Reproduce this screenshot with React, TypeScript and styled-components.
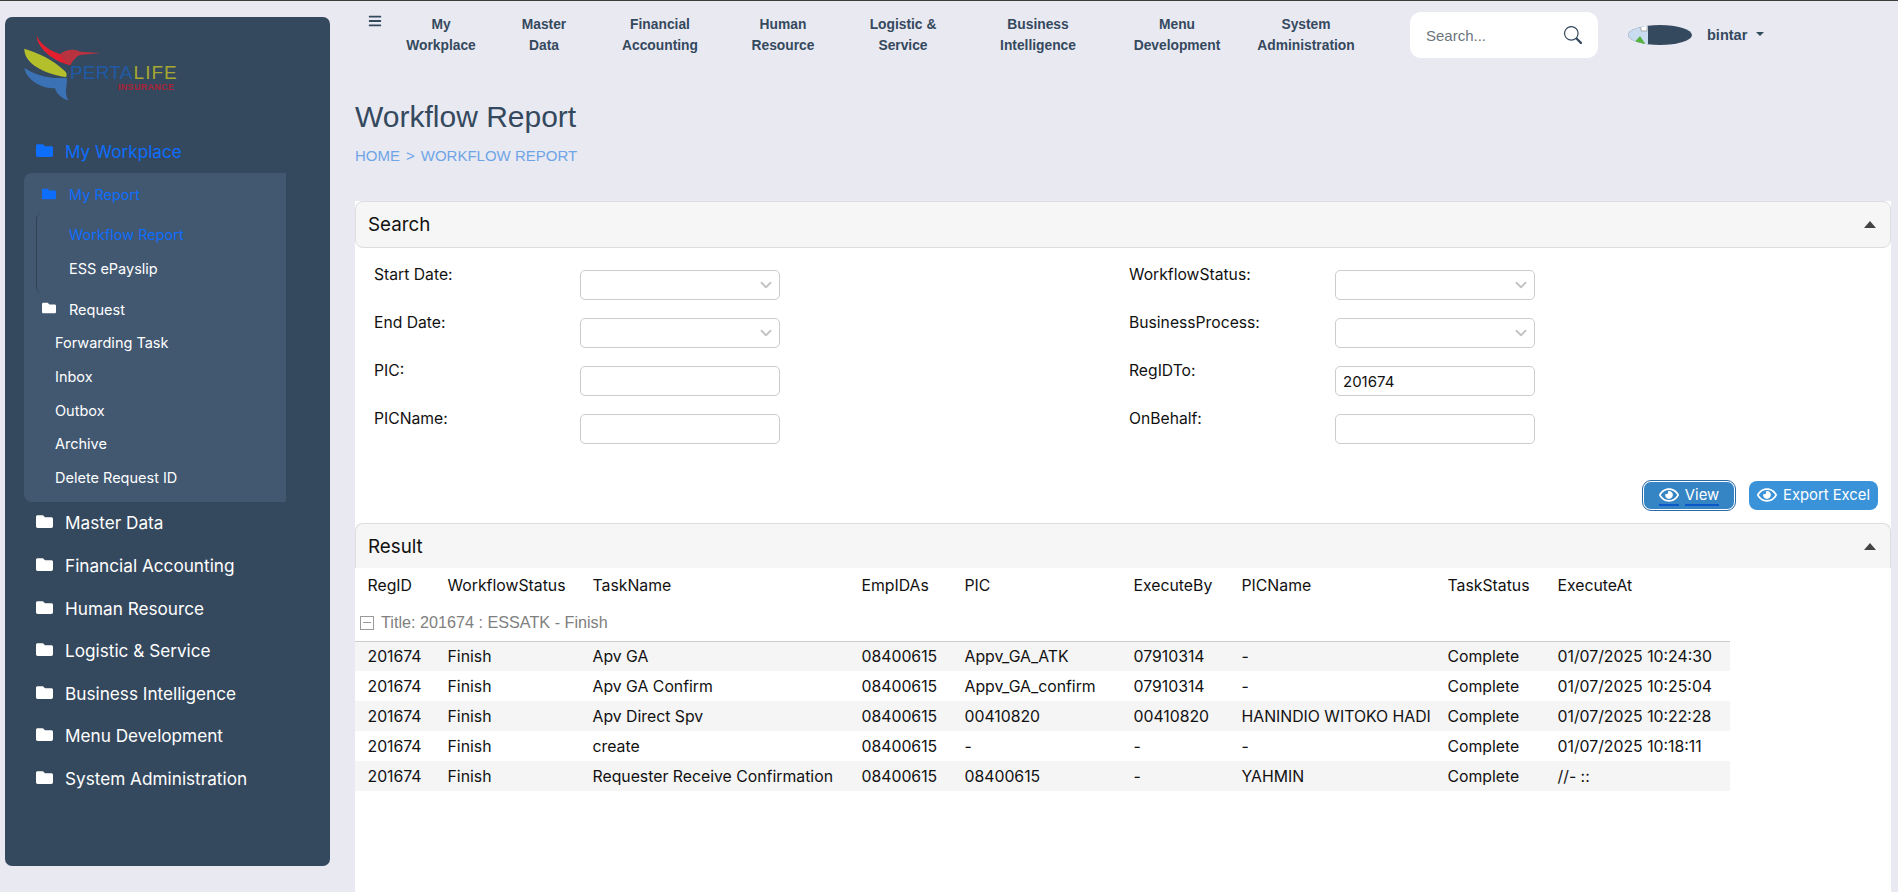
import { FC } from 'react';
import styled, { createGlobalStyle } from 'styled-components';
import { FaFolder, FaBars, FaRegEye } from 'react-icons/fa';
import { BsSearch } from 'react-icons/bs';
import { ChevronDown } from 'lucide-react';

const UI_FONT = `Inter, "Noto Sans", sans-serif`;
const ARIAL = `"Liberation Sans", Arial, sans-serif`;

const NAV_ITEMS = [
	['My', 'Workplace'],
	['Master', 'Data'],
	['Financial', 'Accounting'],
	['Human', 'Resource'],
	['Logistic &', 'Service'],
	['Business', 'Intelligence'],
	['Menu', 'Development'],
	['System', 'Administration'],
];

const SIDE_ITEMS = [
	'Master Data',
	'Financial Accounting',
	'Human Resource',
	'Logistic & Service',
	'Business Intelligence',
	'Menu Development',
	'System Administration',
];

const REQUEST_ITEMS = ['Forwarding Task', 'Inbox', 'Outbox', 'Archive', 'Delete Request ID'];

const COLUMNS = [
	'RegID',
	'WorkflowStatus',
	'TaskName',
	'EmpIDAs',
	'PIC',
	'ExecuteBy',
	'PICName',
	'TaskStatus',
	'ExecuteAt',
];

const COLUMN_WIDTHS = [80, 145, 269, 103, 169, 108, 206, 110, 185];

const ROWS = [
	['201674', 'Finish', 'Apv GA', '08400615', 'Appv_GA_ATK', '07910314', '-', 'Complete', '01/07/2025 10:24:30'],
	['201674', 'Finish', 'Apv GA Confirm', '08400615', 'Appv_GA_confirm', '07910314', '-', 'Complete', '01/07/2025 10:25:04'],
	['201674', 'Finish', 'Apv Direct Spv', '08400615', '00410820', '00410820', 'HANINDIO WITOKO HADI', 'Complete', '01/07/2025 10:22:28'],
	['201674', 'Finish', 'create', '08400615', '-', '-', '-', 'Complete', '01/07/2025 10:18:11'],
	['201674', 'Finish', 'Requester Receive Confirmation', '08400615', '08400615', '-', 'YAHMIN', 'Complete', '//- ::'],
];

const Logo: FC = () => (
	<LogoWrap>
		<svg width="84" height="70" viewBox="60 100 252 210">
			<path d="M110 108C112 150 170 190 212 196L222 170C180 168 130 150 110 108Z" fill="#e3202f" />
			<path d="M178 165C195 150 220 145 240 156L302 160L240 166C225 172 218 190 205 195C195 185 185 175 178 165Z" fill="#b8323f" />
			<path d="M73 147C72 190 130 222 198 232C202 226 200 220 195 215C160 180 115 160 73 147Z" fill="#b3c02c" />
			<path d="M73 205C80 245 135 270 165 265C168 282 188 298 205 302C190 275 204 255 200 234C150 240 105 225 73 205Z" fill="#3b71b5" />
		</svg>
		<LogoName>
			PERTA<LogoLife>LIFE</LogoLife>
		</LogoName>
		<LogoTag>INSURANCE</LogoTag>
	</LogoWrap>
);

const SelectField: FC = () => (
	<SelectWrap>
		<FieldBox as="select" />
		<SelectArrow>
			<ChevronDown size={18} strokeWidth={2.4} />
		</SelectArrow>
	</SelectWrap>
);

const PanelHeader: FC<{ title: string; $open?: boolean }> = ({ title, $open }) => (
	<PanelHead $open={$open}>
		<span>{title}</span>
		<CollapseCaret />
	</PanelHead>
);

const App: FC = () => (
	<>
		<GlobalStyle />
		<Page>
			<Sidebar>
				<Logo />
				<SideNav>
					<TopItem $active>
						<FaFolder size={17} />
						<span>My Workplace</span>
					</TopItem>
					<SubMenu>
						<SubHead $active $first>
							<FaFolder size={14} />
							<span>My Report</span>
						</SubHead>
						<DottedGroup>
							<DottedLink $active>Workflow Report</DottedLink>
							<DottedLink>ESS ePayslip</DottedLink>
						</DottedGroup>
						<SubHead>
							<FaFolder size={14} />
							<span>Request</span>
						</SubHead>
						{REQUEST_ITEMS.map((item) => (
							<SubLink key={item}>{item}</SubLink>
						))}
					</SubMenu>
					{SIDE_ITEMS.map((item) => (
						<TopItem key={item}>
							<FaFolder size={17} />
							<span>{item}</span>
						</TopItem>
					))}
				</SideNav>
			</Sidebar>

			<Main>
				<Topbar>
					<MenuButton>
						<FaBars size={14} />
					</MenuButton>
					<TopNav>
						{NAV_ITEMS.map(([first, second]) => (
							<TopNavItem key={first}>
								{first}
								<br />
								{second}
							</TopNavItem>
						))}
					</TopNav>
					<SearchBox>
						<SearchInput placeholder="Search..." />
						<BsSearch size={18} color="#35495e" />
					</SearchBox>
					<Avatar>
						<svg width="20" height="20" viewBox="0 0 20 20">
							<rect x="0" y="0" width="20" height="20" fill="#c9dcf0" />
							<path d="M4 20L12 11L18 20Z" fill="#56b33e" />
							<path d="M13 0H19V6H13Z" fill="#ffffff" stroke="#999999" strokeWidth="0.8" />
						</svg>
					</Avatar>
					<UserName>bintar</UserName>
					<UserCaret />
				</Topbar>

				<PageTitle>Workflow Report</PageTitle>
				<Breadcrumb>
					HOME<CrumbSep>&gt;</CrumbSep>WORKFLOW REPORT
				</Breadcrumb>

				<Panel>
					<PanelHeader title="Search" />
					<FormGrid>
						<FieldRow>
							<FieldLabel>Start Date:</FieldLabel>
							<SelectField />
						</FieldRow>
						<FieldRow>
							<FieldLabel>WorkflowStatus:</FieldLabel>
							<SelectField />
						</FieldRow>
						<FieldRow>
							<FieldLabel>End Date:</FieldLabel>
							<SelectField />
						</FieldRow>
						<FieldRow>
							<FieldLabel>BusinessProcess:</FieldLabel>
							<SelectField />
						</FieldRow>
						<FieldRow>
							<FieldLabel>PIC:</FieldLabel>
							<FieldBox />
						</FieldRow>
						<FieldRow>
							<FieldLabel>RegIDTo:</FieldLabel>
							<FieldBox defaultValue="201674" />
						</FieldRow>
						<FieldRow>
							<FieldLabel>PICName:</FieldLabel>
							<FieldBox />
						</FieldRow>
						<FieldRow>
							<FieldLabel>OnBehalf:</FieldLabel>
							<FieldBox />
						</FieldRow>
					</FormGrid>
					<ButtonRow>
						<ActionButton $focused $width={92}>
							<ButtonPart>
								<FaRegEye size={20} />
							</ButtonPart>
							<ButtonPart>View</ButtonPart>
						</ActionButton>
						<ActionButton $width={129}>
							<ButtonPart>
								<FaRegEye size={20} />
							</ButtonPart>
							<ButtonPart>Export Excel</ButtonPart>
						</ActionButton>
					</ButtonRow>
					<PanelHeader title="Result" $open />
					<ResultTable>
						<colgroup>
							{COLUMN_WIDTHS.map((width, i) => (
								<col key={i} style={{ width }} />
							))}
						</colgroup>
						<thead>
							<tr>
								{COLUMNS.map((col) => (
									<HeadCell key={col}>{col}</HeadCell>
								))}
							</tr>
						</thead>
						<tbody>
							<tr>
								<GroupCell colSpan={COLUMNS.length}>
									<GroupToggle />
									Title: 201674 : ESSATK - Finish
								</GroupCell>
							</tr>
							{ROWS.map((row, i) => (
								<DataRow key={row[2]} $striped={i % 2 === 0}>
									{row.map((cell, j) => (
										<DataCell key={j}>{cell}</DataCell>
									))}
								</DataRow>
							))}
						</tbody>
					</ResultTable>
				</Panel>
			</Main>
		</Page>
	</>
);

const GlobalStyle = createGlobalStyle`
	html, body {
		margin: 0;
		padding: 0;
		height: 100%;
		overflow: hidden;
		background: #e9e9f2;
		font-family: ${UI_FONT};
	}
	* {
		box-sizing: border-box;
	}
`;

const Page = styled.div`
	display: flex;
	height: 892px;
	border-top: 1px solid #3d3d3d;
	padding: 0 7px 0 5px;
	overflow: hidden;
`;

const Sidebar = styled.aside`
	flex: 0 0 325px;
	height: 849px;
	margin: 16px 25px 0 0;
	padding: 16px 0 0 15px;
	background: #35495e;
	border-radius: 7px;
`;

const LogoWrap = styled.div`
	position: relative;
	width: 160px;
	height: 78px;
`;

const LogoName = styled.div`
	position: absolute;
	left: 50px;
	top: 30px;
	font-family: ${ARIAL};
	font-size: 19px;
	line-height: 20px;
	letter-spacing: 0.2px;
	color: #1f5aa5;
`;

const LogoLife = styled.span`
	color: #a6a82f;
	margin-left: 1px;
	letter-spacing: 1px;
`;

const LogoTag = styled.div`
	position: absolute;
	left: 98px;
	top: 49px;
	font-family: ${ARIAL};
	font-size: 9px;
	line-height: 10px;
	font-weight: bold;
	letter-spacing: 0.3px;
	color: #a82336;
`;

const SideNav = styled.nav`
	margin: 19px 0 0 4px;
	width: 262px;
`;

const TopItem = styled.div<{ $active?: boolean }>`
	display: flex;
	align-items: center;
	gap: 12px;
	height: 42.6px;
	padding-left: 12px;
	font-size: 17.2px;
	color: ${(props) => (props.$active ? '#0d6efd' : '#ffffff')};
	svg {
		margin-top: -2px;
	}
`;

const SubMenu = styled.div`
	height: 329px;
	background: #425871;
	border-radius: 8px 0 0 8px;
`;

const SubHead = styled.div<{ $active?: boolean; $first?: boolean }>`
	display: flex;
	align-items: center;
	gap: 13px;
	height: ${(props) => (props.$first ? '40px' : '33.5px')};
	padding: ${(props) => (props.$first ? '4px' : '0')} 0 0 18px;
	font-size: 14.5px;
	color: ${(props) => (props.$active ? '#0d6efd' : '#ffffff')};
	svg {
		margin-top: -2px;
	}
`;

const DottedGroup = styled.div`
	margin-left: 12px;
	padding: 5px 0 7px 32px;
	border-left: 1px dotted #1e2a36;
	border-radius: 6px;
`;

const DottedLink = styled.div<{ $active?: boolean }>`
	display: flex;
	align-items: center;
	height: 34px;
	font-size: 14.5px;
	color: ${(props) => (props.$active ? '#0d6efd' : '#ffffff')};
`;

const SubLink = styled.div`
	display: flex;
	align-items: center;
	height: 33.6px;
	padding-left: 31px;
	font-size: 14.5px;
	color: #ffffff;
`;

const Main = styled.main`
	flex: 1;
	display: flex;
	flex-direction: column;
	min-width: 0;
`;

const Topbar = styled.header`
	display: flex;
	align-items: flex-start;
	height: 81px;
	padding: 11px 0 0 13px;
	color: #35495e;
`;

const MenuButton = styled.div`
	width: 27px;
	height: 20px;
	padding-top: 2px;
	line-height: 0;
`;

const TopNav = styled.nav`
	display: grid;
	grid-template-columns: 92px 114px 118px 128px 112px 158px 120px 138px;
	margin-top: 2px;
`;

const TopNavItem = styled.div`
	text-align: center;
	font-family: ${ARIAL};
	font-size: 13.8px;
	font-weight: bold;
	line-height: 21px;
`;

const SearchBox = styled.div`
	display: flex;
	align-items: center;
	width: 188px;
	height: 46px;
	margin-left: 35px;
	padding: 0 16px 0 14px;
	background: #ffffff;
	border-radius: 11px;
`;

const SearchInput = styled.input`
	flex: 1;
	min-width: 0;
	border: 0;
	outline: 0;
	background: transparent;
	font-family: ${ARIAL};
	font-size: 15px;
	&::placeholder {
		color: #6c757d;
		opacity: 1;
	}
`;

const Avatar = styled.div`
	width: 64px;
	height: 20px;
	margin: 13px 0 0 30px;
	background: #35495e;
	border-radius: 50%;
	overflow: hidden;
	line-height: 0;
`;

const UserName = styled.div`
	margin: 13px 0 0 15px;
	font-family: ${ARIAL};
	font-size: 14.5px;
	font-weight: bold;
	line-height: 20px;
`;

const UserCaret = styled.div`
	width: 0;
	height: 0;
	margin: 20px 0 0 9px;
	border-left: 4px solid transparent;
	border-right: 4px solid transparent;
	border-top: 4px solid #35495e;
`;

const PageTitle = styled.h1`
	margin: 15px 0 0;
	font-family: ${ARIAL};
	font-size: 30px;
	font-weight: normal;
	line-height: 40px;
	color: #35495e;
`;

const Breadcrumb = styled.div`
	margin-top: 9px;
	font-family: ${ARIAL};
	font-size: 15px;
	line-height: 20px;
	color: #6fa5e6;
`;

const CrumbSep = styled.span`
	margin: 0 6px;
`;

const Panel = styled.section`
	flex: 1;
	margin-top: 35px;
	background: #ffffff;
`;

const PanelHead = styled.div<{ $open?: boolean }>`
	display: flex;
	align-items: center;
	justify-content: space-between;
	height: ${(props) => (props.$open ? '45px' : '47px')};
	padding: 0 14px 0 12px;
	background: #f6f6f6;
	border: 1px solid #dddddd;
	border-bottom-width: ${(props) => (props.$open ? '0' : '1px')};
	border-radius: ${(props) => (props.$open ? '8px 8px 0 0' : '8px')};
	font-size: 18.8px;
	color: #111111;
`;

const CollapseCaret = styled.i`
	width: 0;
	height: 0;
	border-left: 6px solid transparent;
	border-right: 6px solid transparent;
	border-bottom: 7px solid #444444;
`;

const FormGrid = styled.div`
	display: grid;
	grid-template-columns: 755px 1fr;
	padding: 15px 0 0 19px;
`;

const FieldRow = styled.div`
	display: grid;
	grid-template-columns: 206px 200px;
	height: 48px;
`;

const FieldLabel = styled.label`
	margin-top: 1px;
	font-size: 15.7px;
	line-height: 21px;
	color: #111111;
`;

const FieldBox = styled.input`
	display: block;
	width: 200px;
	height: 30px;
	margin-top: 7px;
	padding: 0 7px;
	background: #ffffff;
	border: 1px solid #cccccc;
	border-radius: 5px;
	outline: 0;
	appearance: none;
	font-family: ${UI_FONT};
	font-size: 15px;
	color: #111111;
`;

const SelectWrap = styled.div`
	position: relative;
`;

const SelectArrow = styled.span`
	position: absolute;
	right: 5px;
	top: 13px;
	line-height: 0;
	color: #c2c2c2;
	pointer-events: none;
`;

const ButtonRow = styled.div`
	display: flex;
	justify-content: flex-end;
	gap: 14px;
	margin-top: 26px;
	padding-right: 13px;
	height: 42px;
`;

const ActionButton = styled.button<{ $focused?: boolean; $width: number }>`
	display: flex;
	align-items: center;
	justify-content: center;
	gap: 6px;
	width: ${(props) => props.$width}px;
	height: 29px;
	padding: 0;
	background: ${(props) => (props.$focused ? '#3584c4' : '#3a92d8')};
	border: ${(props) => (props.$focused ? '1px solid #ffffff' : '0')};
	outline: ${(props) => (props.$focused ? '1px solid #2a6aa8' : '0')};
	border-radius: 8px;
	font-family: ${UI_FONT};
	font-size: 14.8px;
	color: #ffffff;
	span {
		border-bottom: ${(props) => (props.$focused ? '2px solid #0a58ca' : '2px solid transparent')};
	}
`;

const ButtonPart = styled.span`
	display: inline-flex;
	align-items: center;
	height: 20px;
`;

const ResultTable = styled.table`
	width: 1375px;
	table-layout: fixed;
	border-collapse: collapse;
	font-size: 15.8px;
	color: #111111;
`;

const HeadCell = styled.th`
	height: 35px;
	padding: 0 0 0 12.5px;
	text-align: left;
	font-weight: normal;
	white-space: nowrap;
`;

const GroupCell = styled.td`
	height: 38px;
	padding: 2px 0 0 5px;
	border-bottom: 1px solid #cccccc;
	font-family: ${ARIAL};
	font-size: 16.2px;
	color: #808080;
`;

const GroupToggle = styled.span`
	display: inline-block;
	position: relative;
	width: 14px;
	height: 14px;
	margin-right: 7px;
	vertical-align: -2px;
	border: 1px solid #999999;
	&::after {
		content: '';
		position: absolute;
		left: 2px;
		right: 2px;
		top: 5px;
		height: 1px;
		background: #999999;
	}
`;

const DataRow = styled.tr<{ $striped?: boolean }>`
	background: ${(props) => (props.$striped ? '#f5f5f5' : '#ffffff')};
`;

const DataCell = styled.td`
	height: 30px;
	padding: 0 0 0 12.5px;
	white-space: nowrap;
`;

export default App;
